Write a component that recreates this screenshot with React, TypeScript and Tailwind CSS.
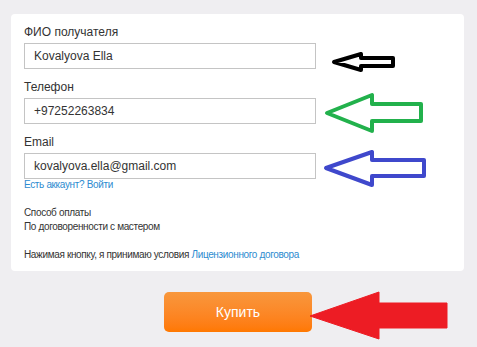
import React from 'react';

const font = { fontFamily: '"Liberation Sans", Arial, sans-serif' };

interface FieldProps {
  label: string;
  value: string;
}

const Field: React.FC<FieldProps> = ({ label, value }) => (
  <div className="flex flex-col">
    <label className="text-[12px] leading-[15px] text-[#333] mb-[3px]">{label}</label>
    <div className="w-[292px] h-[26px] border border-[#c4c4c4] flex items-center pl-[9px] text-[12px] text-[#333]">
      {value}
    </div>
  </div>
);

const Arrows: React.FC = () => (
  <svg className="absolute inset-0 pointer-events-none" width="477" height="347" viewBox="0 0 477 347">
    <polygon points="334,62 361,54 361,58 393,58 393,66 361,66 361,70" fill="none" stroke="#000" strokeWidth="4" strokeLinejoin="round" />
    <polygon points="327,113 372,95 372,104 421,104 421,121 372,121 372,131" fill="none" stroke="#22b14c" strokeWidth="4" strokeLinejoin="round" />
    <polygon points="326,168 372,152 372,160 424,160 424,176 372,176 372,185" fill="none" stroke="#3f48cc" strokeWidth="4" strokeLinejoin="round" />
    <polygon points="310,316 379,292 379,303 447,303 447,328 379,328 379,339" fill="#ed1c24" stroke="#ed1c24" strokeWidth="1" strokeLinejoin="round" />
  </svg>
);

export default function App() {
  return (
    <div className="relative w-[477px] h-[347px] bg-[#efeef1] overflow-hidden pt-[14px]" style={font}>
      <div className="ml-[11px] w-[453px] h-[257px] bg-white rounded-[4px] pl-[13px] pt-[11px]">
        <div className="flex flex-col gap-[11px]">
          <Field label="ФИО получателя" value="Kovalyova Ella" />
          <Field label="Телефон" value="+97252263834" />
          <div className="flex flex-col">
            <Field label="Email" value="kovalyova.ella@gmail.com" />
            <a className="text-[10px] leading-[12px] tracking-[-0.35px] text-[#2d8bd0] w-fit">Есть аккаунт? Войти</a>
          </div>
        </div>
        <div className="mt-[15px] text-[10px] leading-[14px] tracking-[-0.35px] text-[#333]">
          <div>Способ оплаты</div>
          <div>По договоренности с мастером</div>
        </div>
        <div className="mt-[14px] text-[10px] leading-[14px] tracking-[-0.35px] text-[#333]">
          Нажимая кнопку, я принимаю условия <a className="text-[#2d8bd0]">Лицензионного договора</a>
        </div>
      </div>
      <button className="ml-[164px] mt-[21px] w-[148px] h-[40px] rounded-[5px] bg-gradient-to-b from-[#f8973c] to-[#ff7800] text-white text-[14px]">
        Купить
      </button>
      <Arrows />
    </div>
  );
}
